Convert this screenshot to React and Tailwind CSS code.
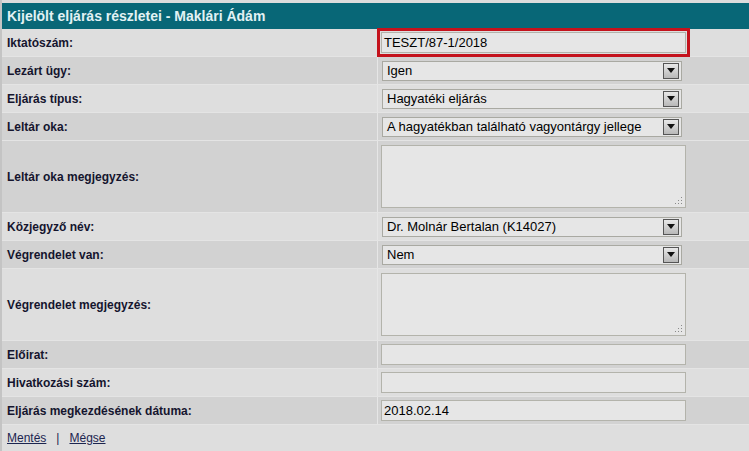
import React from "react";

const font = { fontFamily: '"Liberation Sans", Arial, sans-serif' };

function Arrow() {
  return (
    <div className="absolute right-[2px] top-[1px] w-[16px] h-[16px] border border-[#555] bg-gradient-to-b from-[#e8e8e8] to-[#b8b8b8] flex items-center justify-center">
      <svg width="8" height="5" viewBox="0 0 8 5">
        <path d="M0 0 L8 0 L4 5 Z" fill="#111" />
      </svg>
    </div>
  );
}

function Select({ value }) {
  return (
    <div className="relative w-[300px] h-[20px] bg-[#e6e6e6] border border-[#a9a9a2] text-[13px] text-black leading-[18px] pl-[4px] ml-[1px]">
      {value}
      <Arrow />
    </div>
  );
}

function TextInput({ value, focus }) {
  return (
    <div
      className={
        "w-[305px] h-[21px] bg-[#e6e6e6] border border-[#b3b3ab] text-[13px] text-black leading-[19px] pl-[2px] " +
        (focus ? "outline-[3px] outline outline-[#c4121c] outline-offset-[1px]" : "")
      }
    >
      {value}
    </div>
  );
}

function TextArea() {
  return (
    <div className="relative w-[305px] h-[63px] bg-[#e6e6e6] border border-[#b3b3ab]">
      <svg className="absolute right-[2px] bottom-[2px]" width="8" height="8" viewBox="0 0 8 8">
        <rect x="6" y="0" width="1" height="1" fill="#8a8a8a" />
        <rect x="6" y="3" width="1" height="1" fill="#8a8a8a" />
        <rect x="3" y="3" width="1" height="1" fill="#8a8a8a" />
        <rect x="6" y="6" width="1" height="1" fill="#8a8a8a" />
        <rect x="3" y="6" width="1" height="1" fill="#8a8a8a" />
        <rect x="0" y="6" width="1" height="1" fill="#8a8a8a" />
      </svg>
    </div>
  );
}

function Row({ label, dark, tall, children }) {
  return (
    <div
      className={
        "flex border-b border-[#e4e4e4] " +
        (tall ? "h-[72px] " : "h-[28px] ") +
        (dark ? "bg-[#d2d2d2]" : "bg-[#dedede]")
      }
    >
      <div className="w-[376px] border-r border-[#e6e6e6] flex items-center pl-[5px] text-[12px] font-bold text-[#15152e]">
        {label}
      </div>
      <div className="flex-1 flex items-center pl-[3px]">{children}</div>
    </div>
  );
}

export default function App() {
  return (
    <div style={font} className="w-[749px] h-[451px] bg-[#dcdcdc] pt-[3px] border-l-2 border-[#c4c4c4] overflow-hidden">
      <div className="h-[26px] bg-[#086777] text-[#e2f2f4] text-[14px] font-bold flex items-center pl-[5px]">
        Kijelölt eljárás részletei - Maklári Ádám
      </div>
      <Row label="Iktatószám:">
        <TextInput value="TESZT/87-1/2018" focus />
      </Row>
      <Row label="Lezárt ügy:" dark>
        <Select value="Igen" />
      </Row>
      <Row label="Eljárás típus:">
        <Select value="Hagyatéki eljárás" />
      </Row>
      <Row label="Leltár oka:" dark>
        <Select value="A hagyatékban található vagyontárgy jellege" />
      </Row>
      <Row label="Leltár oka megjegyzés:" dark tall>
        <TextArea />
      </Row>
      <Row label="Közjegyző név:">
        <Select value="Dr. Molnár Bertalan (K14027)" />
      </Row>
      <Row label="Végrendelet van:" dark>
        <Select value="Nem" />
      </Row>
      <Row label="Végrendelet megjegyzés:" tall>
        <TextArea />
      </Row>
      <Row label="Előirat:" dark>
        <TextInput value="" />
      </Row>
      <Row label="Hivatkozási szám:">
        <TextInput value="" />
      </Row>
      <Row label="Eljárás megkezdésének dátuma:" dark>
        <TextInput value="2018.02.14" />
      </Row>
      <div className="h-[26px] bg-[#dedede] flex items-center pl-[5px] text-[12px] text-[#1c2550]">
        <span className="underline">Mentés</span>
        <span className="mx-[10px]">|</span>
        <span className="underline">Mégse</span>
      </div>
    </div>
  );
}
